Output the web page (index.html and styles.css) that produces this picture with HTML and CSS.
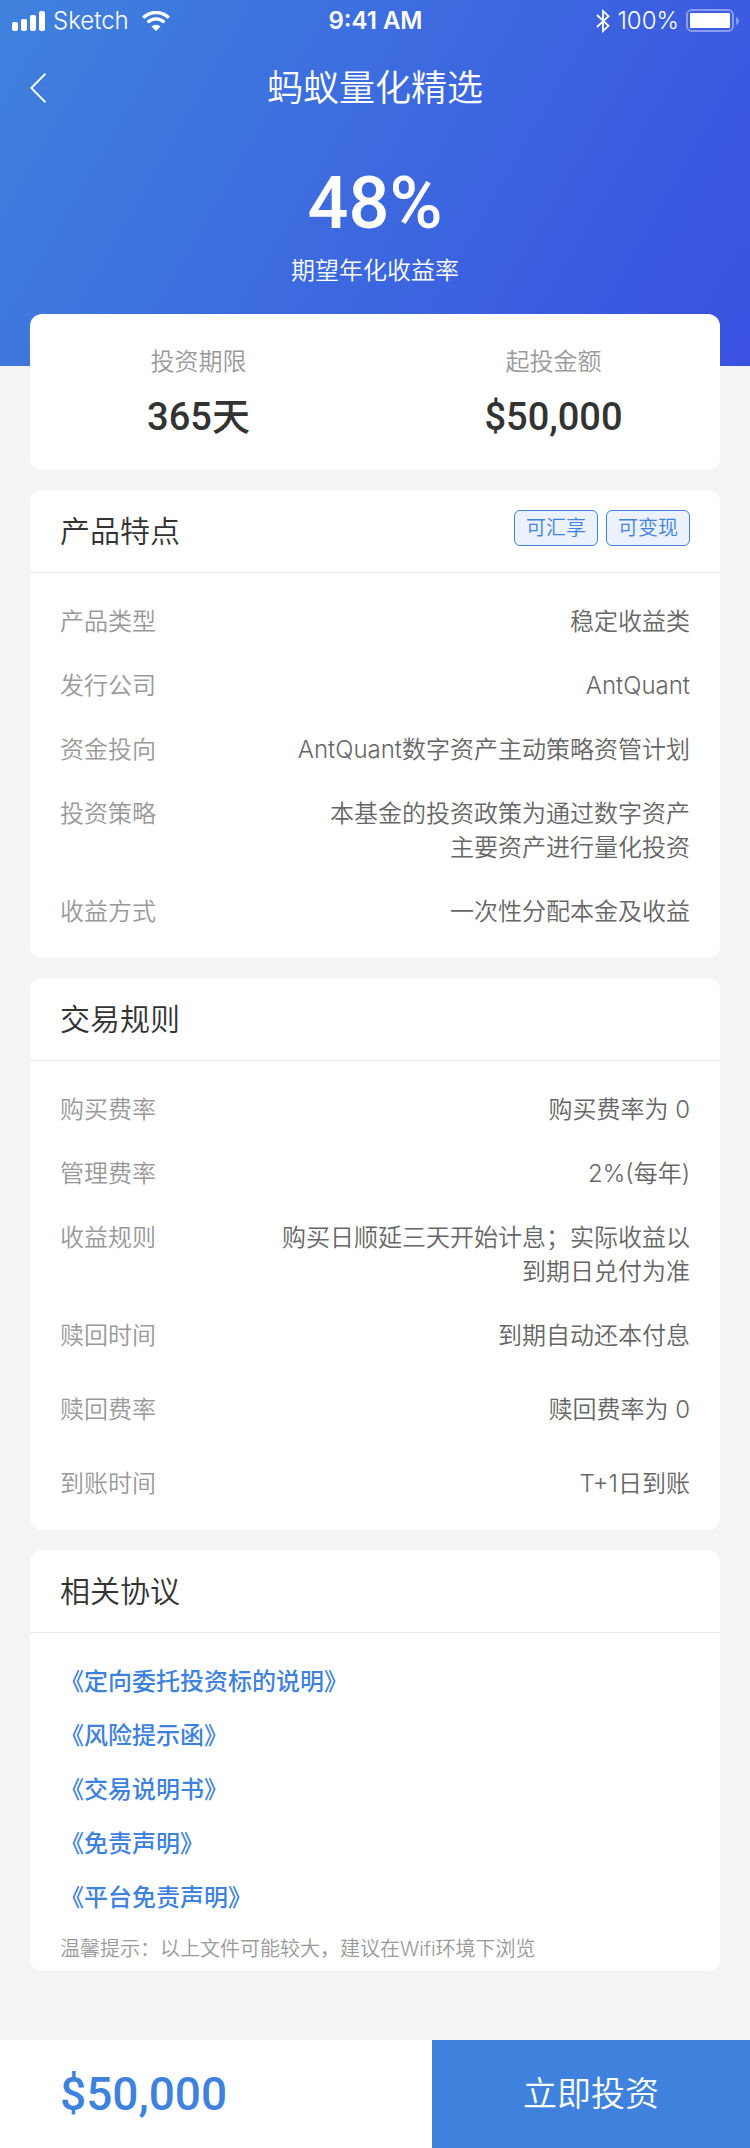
FILE: index.html
```html
<!DOCTYPE html>
<html lang="zh-CN">
<head>
<meta charset="utf-8">
<meta name="viewport" content="width=device-width, initial-scale=1">
<title>蚂蚁量化精选</title>
<link rel="stylesheet" href="styles.css">
</head>
<body>
<div class="page">
  <header class="hero">
    <div class="status">
      <div class="status-side">
        <svg class="signal" width="34" height="20" viewBox="0 0 34 20" aria-hidden="true">
          <rect x="0" y="11" width="6" height="9" rx="2"/>
          <rect x="9" y="8" width="6" height="12" rx="2"/>
          <rect x="18" y="4" width="6" height="16" rx="2"/>
          <rect x="27" y="0" width="6" height="20" rx="2"/>
        </svg>
        <span>Sketch</span>
        <svg class="wifi" width="28" height="20" viewBox="0 0 28 20" aria-hidden="true">
          <path d="M1.2 6.8A18.2 18.2 0 0 1 26.8 6.8" fill="none" stroke="#fff" stroke-width="3.4"/>
          <path d="M5.6 11.4A12 12 0 0 1 22.4 11.4" fill="none" stroke="#fff" stroke-width="3.2"/>
          <path d="M14 20L9.4 15.5A6.6 6.6 0 0 1 18.6 15.5Z"/>
        </svg>
      </div>
      <span class="status-time">9:41 AM</span>
      <div class="status-side status-right">
        <svg class="bluetooth" width="14" height="24" viewBox="0 0 14 24" aria-hidden="true">
          <path d="M1 6L12.5 16.8L7 22V2L12.5 7.2L1 18" fill="none" stroke="#fff" stroke-width="1.8"/>
        </svg>
        <span>100%</span>
        <svg class="battery" width="53" height="24" viewBox="0 0 53 24" aria-hidden="true">
          <rect x="1" y="1" width="46" height="21" rx="5" fill="none" stroke="#fff" stroke-width="2" opacity=".4"/>
          <rect x="4" y="4" width="40" height="15" rx="1"/>
          <path d="M50 8C54 9.5 54 14.5 50 16Z" opacity=".4"/>
        </svg>
      </div>
    </div>
    <nav class="nav">
      <button class="back" type="button" aria-label="返回">
        <svg width="16" height="30" viewBox="0 0 16 30" aria-hidden="true"><path d="M15.5 .7L1.3 15L15.5 29.3" fill="none" stroke="#fff" stroke-width="2"/></svg>
      </button>
      <h1 class="title">蚂蚁量化精选</h1>
    </nav>
    <p class="rate">48%</p>
    <p class="rate-label">期望年化收益率</p>
  </header>

  <main class="content">
    <section class="card summary">
      <div class="stat"><span class="stat-label">投资期限</span><strong class="stat-value">365天</strong></div>
      <div class="stat"><span class="stat-label">起投金额</span><strong class="stat-value">$50,000</strong></div>
    </section>

    <section class="card">
      <div class="card-head">
        <h2 class="card-title">产品特点</h2>
        <div class="tags"><span class="tag">可汇享</span><span class="tag">可变现</span></div>
      </div>
      <dl class="rows">
        <div class="row"><dt>产品类型</dt><dd>稳定收益类</dd></div>
        <div class="row"><dt>发行公司</dt><dd>AntQuant</dd></div>
        <div class="row"><dt>资金投向</dt><dd>AntQuant数字资产主动策略资管计划</dd></div>
        <div class="row"><dt>投资策略</dt><dd>本基金的投资政策为通过数字资产<br>主要资产进行量化投资</dd></div>
        <div class="row"><dt>收益方式</dt><dd>一次性分配本金及收益</dd></div>
      </dl>
    </section>

    <section class="card">
      <div class="card-head"><h2 class="card-title">交易规则</h2></div>
      <dl class="rows">
        <div class="row"><dt>购买费率</dt><dd>购买费率为 0</dd></div>
        <div class="row"><dt>管理费率</dt><dd>2%(每年)</dd></div>
        <div class="row"><dt>收益规则</dt><dd>购买日顺延三天开始计息；实际收益以<br>到期日兑付为准</dd></div>
        <div class="row"><dt>赎回时间</dt><dd>到期自动还本付息</dd></div>
        <div class="row row-loose"><dt>赎回费率</dt><dd>赎回费率为 0</dd></div>
        <div class="row row-loose"><dt>到账时间</dt><dd>T+1日到账</dd></div>
      </dl>
    </section>

    <section class="card">
      <div class="card-head"><h2 class="card-title">相关协议</h2></div>
      <ul class="links">
        <li><a href="#entrust">《定向委托投资标的说明》</a></li>
        <li><a href="#risk">《风险提示函》</a></li>
        <li><a href="#trade">《交易说明书》</a></li>
        <li><a href="#disclaimer">《免责声明》</a></li>
        <li><a href="#platform">《平台免责声明》</a></li>
      </ul>
      <p class="note">温馨提示：以上文件可能较大，建议在Wifi环境下浏览</p>
    </section>
  </main>

  <footer class="bar">
    <div class="bar-amount">$50,000</div>
    <button class="bar-button" type="button">立即投资</button>
  </footer>
</div>
</body>
</html>
```
FILE: styles.css
```css
* { box-sizing: border-box; }

body, h1, h2, p, dl, dd, ul { margin: 0; padding: 0; }

body {
  background: #f4f4f4;
  color: #333;
  font-family: Inter, "Noto Sans CJK SC", sans-serif;
  font-size: 24px;
  font-weight: 350;
  line-height: 34px;
}

button { border: 0; padding: 0; font: inherit; color: inherit; cursor: pointer; }

svg { display: block; fill: #fff; flex: none; }

.page { display: flex; flex-direction: column; min-height: 100vh; }

.hero {
  height: 366px;
  background: linear-gradient(120deg, #3f82dd, #3a50e1);
  color: #fff;
  text-align: center;
}

.status {
  display: grid;
  grid-template-columns: 1fr auto 1fr;
  align-items: center;
  height: 42px;
  padding: 0 11px 0 12px;
}

.status-side { display: flex; align-items: center; gap: 7px; }
.status-right { justify-content: flex-end; }
.status-time { font-weight: 600; }
.wifi { margin-left: 6px; }

.nav {
  display: grid;
  grid-template-columns: 60px 1fr 60px;
  align-items: center;
  height: 92px;
}

.back { display: flex; padding: 10px 0 10px 30px; background: none; }
.title { font-size: 36px; font-weight: 350; line-height: 50px; }

.rate {
  padding-top: 28px;
  font-family: Roboto, sans-serif;
  font-size: 72px;
  font-weight: 500;
  line-height: 84px;
}

.rate-label { padding-top: 8px; }

.content {
  display: flex;
  flex-direction: column;
  gap: 20px;
  flex: 1;
  margin-top: -52px;
  padding: 0 30px 68px;
}

.card { border-radius: 12px; background: #fff; }

.summary { display: grid; grid-template-columns: 1fr 1fr; padding: 31px 0 27px; }
.stat { display: flex; flex-direction: column; align-items: center; gap: 12px; }
.stat:first-child { padding-right: 8px; }
.stat:last-child { padding-left: 12px; }
.stat-label { color: #999; }

.stat-value {
  font-family: Roboto, "Noto Sans CJK SC", sans-serif;
  font-size: 38px;
  font-weight: 500;
  line-height: 52px;
}

.card-head {
  display: flex;
  align-items: center;
  justify-content: space-between;
  height: 83px;
  padding: 0 30px;
  border-bottom: 1px solid #e8e8e8;
}

.card-title { font-size: 30px; font-weight: 350; line-height: 42px; }
.tags { display: flex; gap: 8px; margin-bottom: 6px; }

.tag {
  padding: 3px 11px;
  border: 1px solid #3f82dd;
  border-radius: 6px;
  background: #ebf2fc;
  color: #3f82dd;
  font-size: 20px;
  line-height: 28px;
}

.rows { display: flex; flex-direction: column; gap: 30px; padding: 32px 30px 29px; }
.row { display: flex; justify-content: space-between; gap: 20px; }
.row-loose { padding-top: 10px; }
.row dt { flex: none; color: #999; }
.row dd { color: #666; text-align: right; }

.links { display: flex; flex-direction: column; gap: 20px; padding: 32px 30px 0; list-style: none; }
.links a { color: #3f82dd; font-weight: 500; text-decoration: none; }

.note { padding: 20px 30px 8px; color: #999; font-size: 20px; line-height: 28px; }

.bar { display: grid; grid-template-columns: 432fr 318fr; height: 108px; background: #fff; }

.bar-amount {
  display: flex;
  align-items: center;
  padding-left: 60px;
  color: #3f82dd;
  font-family: Roboto, sans-serif;
  font-size: 46px;
  font-weight: 500;
}

.bar-button { background: #3f82dd; color: #fff; font-size: 34px; }
```
